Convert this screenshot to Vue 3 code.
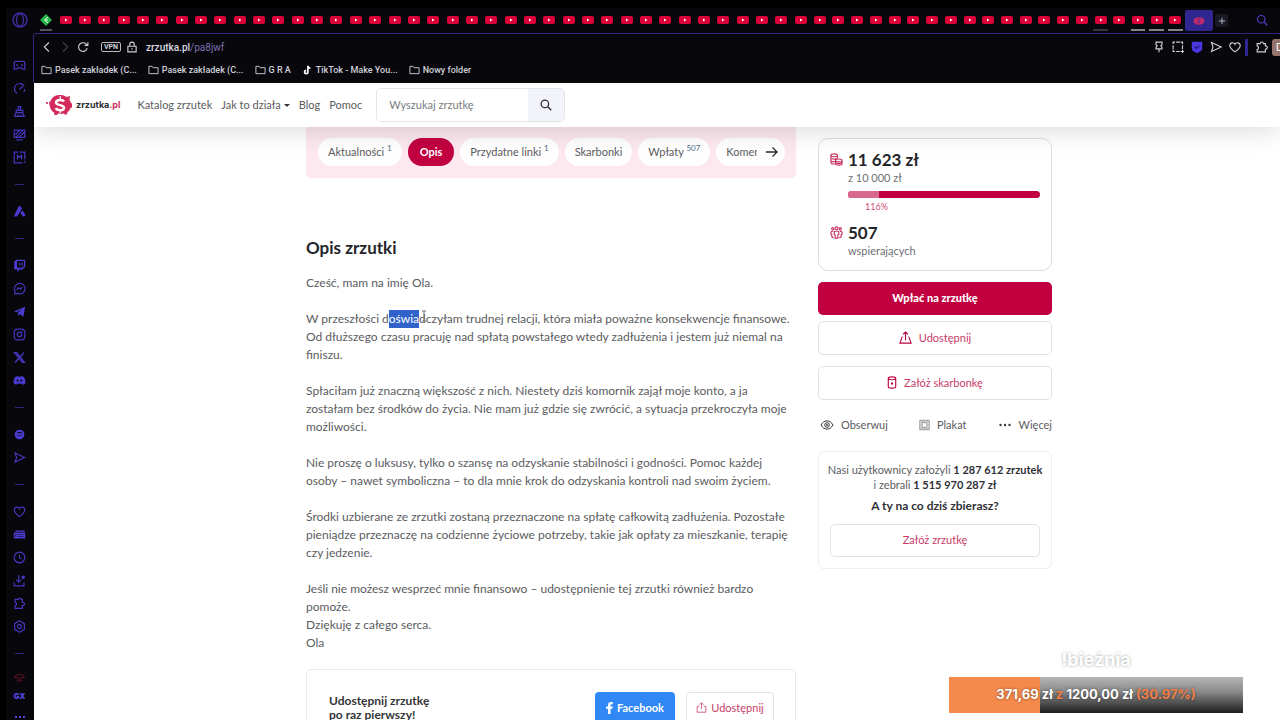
<script setup>
import { ref } from "vue";

const searchWord = ref("");
const currentTab = ref("Opis");

// tabs with a line under the icon
const marks = { 54: "dim", 56: "bright", 57: "bright", 58: "bright" };
const browserTabs = Array.from({ length: 59 }, (_, index) => ({
  id: index,
  narrow: index >= 39,
  mark: marks[index] || "",
}));

const sideItems = [
  { name: "gamepad", d: "M3 3h10a1.500 1.500 0 0 1 1.500 1.500v8h-3L10 11H6l-1.500 1.500h-3v-8A1.500 1.500 0 0 1 3 3zM4 7.500h2.200M5.100 6.400v2.200M9.800 7.500H12M10.900 6.400v2.200" },
  { name: "speed", d: "M5 14A6.500 6.500 0 1 1 13.800 5M8 9l4-3.500M14.500 8.500a6 6 0 0 1-1.500 4" },
  { name: "cleaner", d: "M6.500 2h3v4h-3zM4 6.500h8v3H4zM3.500 9.500L2 14h11l-1-4.500M6 14v-2M9 14v-2M12 13h3" },
  { name: "wallpaper", d: "M1.500 2.500h13v9h-13zM4 14.500h8M3 8l5-5M4 11l8-8M8 11l6-6" },
  { name: "mods", d: "M6 1.500H1.500v13H12M8 1.500h6.500V10M14.500 12v2.500M5.500 10.500v-5L8 8l2.500-2.500v5" },
  { name: "line1", line: true },
  { name: "aria", fill: true, d: "M7 1.500h2.500L11 5 5 14H1zM10.500 8l1.500-1 3.500 5.500-1.500 1.500h-2L9 9.500z" },
  { name: "line2", line: true },
  { name: "twitch", fill: true, d: "M4 1h11v8.500L11.500 13H8.500L5.500 16v-3H1.500V3.500zM5 2.500v8h2.500v1.500L9 10.500h2.500l2-2v-6zM7.500 4.500H9V8H7.500zM10.500 4.500H12V8h-1.500z" },
  { name: "messenger", d: "M2 14.500l.5-3.500A6.500 6.500 0 1 1 5.500 14zM4.500 9.500L7 7l2 1.800L11.500 6.500" },
  { name: "telegram", fill: true, d: "M1 8L15 2 12.800 14.500 8.500 11.200 6.500 13.500 6 9.500 11.500 5 4.500 9z" },
  { name: "instagram", d: "M5 1.500h6A3.500 3.500 0 0 1 14.500 5v6a3.500 3.500 0 0 1-3.500 3.500H5A3.500 3.500 0 0 1 1.500 11V5A3.500 3.500 0 0 1 5 1.500zM8 5.200a2.800 2.800 0 1 0 .01 0zM11.600 3.700v1.200" },
  { name: "x", d: "M2 2h2.500l9.500 12h-2.500zM13.500 2L9 7.200M7 9.200L2.500 14", bold: true },
  { name: "discord", fill: true, d: "M3 3.500l3-1 .7 1h2.600l.7-1 3 1c2 2.500 2.500 5 2.200 8L12 13.500l-1-1.500H5l-1 1.500-3.200-2C.5 8.500 1 6 3 3.500zM5.700 6.800a1.200 1.300 0 1 0 .01 0zM10.300 6.800a1.200 1.300 0 1 0 .01 0z" },
  { name: "line3", line: true },
  { name: "spotify", fill: true, d: "M8 2a6 6 0 1 0 .01 0zM5 5.500c2.500-.8 4.500-.5 6.500.5v1c-2-1-4-1.200-6.500-.5zM5 8.500c2-.6 4-.4 5.500.5v.8c-1.700-.8-3.500-1-5.500-.4z" },
  { name: "flow", d: "M2.500 2.500L14.500 8l-12 5.500 2-5.500z" },
  { name: "line4", line: true },
  { name: "heart", d: "M8 14.300C5 12 1.500 9 1.500 6c0-3.800 5-4.800 6.500-1.500C9.500 1.200 14.500 2.200 14.500 6c0 3-3.500 6-6.500 8.300z" },
  { name: "wallet", fill: true, d: "M3 3h11.500v1.500H3zM1 5.500h14V13H1zM3 7.500v3.500h1V7.500zM6 8v.7h7V8zM6 10.200v.7h7v-.7z" },
  { name: "history", d: "M8 1.500a6.500 6.500 0 1 0 .01 0zM8 4.500V8.500l2.500 1" },
  { name: "downloads", d: "M7 1.500v8M4 7l3 3 3-3M1.500 10.500v4h12v-4M12.500 2.500a1.500 1.500 0 1 0 .01 0zM12.500 3v2" },
  { name: "extensions", d: "M2.500 3h4c.5-2 3-2 3.500 0h1.500v3.500c3.500-.5 3.500 4 0 4V14h-9v-3c2.500-.5 2.500-4 0-4.500z" },
  { name: "settings", d: "M8 1l6 3.500v7L8 15l-6-3.500v-7zM8 5.500a2.500 2.500 0 1 0 .01 0z" },
  { name: "line5", line: true },
];

const bookmarks = [
  { id: 1, name: "Pasek zakładek (C...", folder: true },
  { id: 2, name: "Pasek zakładek (C...", folder: true },
  { id: 3, name: "G R A", folder: true },
  { id: 4, name: "TikTok - Make You...", folder: false },
  { id: 5, name: "Nowy folder", folder: true },
];

const toolIcons = [
  { name: "Przypnij", d: "M4 1.500h8v3.500l-1.500 1.500L12 8.500v2H4v-2l1.500-2L4 5zM8 10.500V15" },
  { name: "Zrzut ekranu", d: "M1.500 4V1.500H4M5.500 1.500h5M11.500 1.500H14V4M14 5.500v5M1.500 5.500v5M1.500 11.500V14H4M5.500 14h5M11.500 14H16M14 11.500V16" },
  { name: "Ochrona", fill: true, d: "M1 1h14v8.500c0 3.500-4 5-7 6.500-3-1.500-7-3-7-6.500z" },
  { name: "Wyślij", d: "M2 2l13 6-13 6 2-6z" },
  { name: "Ulubione", d: "M8 14.500C5 12.500 1 9.500 1 6c0-4 5.500-5 7-1.500C9.500 1 15 2 15 6c0 3.500-4 6.500-7 8.500z" },
];

const tabs = [
  { name: "Aktualności", count: 1 },
  { name: "Opis" },
  { name: "Przydatne linki", count: 1 },
  { name: "Skarbonki" },
  { name: "Wpłaty", count: 507 },
  { name: "Komentarze" },
];

const collected = 11623;
const goal = 10000;
const overGoal = ((collected - goal) / goal) * 100;

const stream = { now: "371,69 zł", goal: "1200,00 zł", percent: 30.97 };
</script>

<template>
  <div class="browser">
    <aside class="side-bar">
      <svg class="opera" viewBox="0 0 16 16">
        <ellipse cx="8" cy="8" rx="7" ry="7" />
        <ellipse cx="8" cy="8" rx="3.500" ry="6" />
      </svg>
      <div
        v-for="item in sideItems"
        :key="item.name"
        :class="item.line ? 'side-line' : 'side-item'"
      >
        <svg
          v-if="!item.line"
          viewBox="0 0 16 16"
          :class="{ fill: item.fill, bold: item.bold }"
        >
          <path :d="item.d" fill-rule="evenodd" />
        </svg>
      </div>
      <svg class="side-red" viewBox="0 0 16 16">
        <path d="M2 7l3-3h6l3 3-3 1H5zM5 10l1 2M8 9v4M11 10l-1 2" />
      </svg>
      <span class="gx">GX</span>
      <span class="dots"><i></i><i></i><i></i></span>
    </aside>

    <div class="window">
      <div class="tab-strip">
        <div class="tab pinned">
          <svg viewBox="0 0 12 12">
            <path d="M6 0l6 6-6 6-6-6z" fill="#27b24a" />
            <path d="M8 3L4.500 6 8 9M5 6h3" stroke="#d9ffe0" fill="none" />
          </svg>
        </div>
        <div class="tab-list">
          <div
            v-for="t in browserTabs"
            :key="t.id"
            class="tab"
            :class="[t.mark, { narrow: t.narrow }]"
          >
            <svg viewBox="0 0 12 8">
              <rect width="12" height="8" rx="2" fill="#dc0039" />
              <path d="M5 2.500v3L7.500 4z" fill="#fff" />
            </svg>
          </div>
        </div>
        <div class="tab active">
          <svg viewBox="0 0 12 8">
            <ellipse cx="6" cy="4" rx="5.500" ry="3.800" fill="#c22968" />
            <path d="M7.500 2.500c-3-1-3 1-1.500 1.500s1.500 2.300-1.500 1.500" stroke="#4a2a99" fill="none" />
          </svg>
        </div>
        <button type="button" class="new-tab" aria-label="Nowa karta">
          <svg viewBox="0 0 10 10"><path d="M5 1v8M1 5h8" /></svg>
        </button>
        <svg class="tab-search" viewBox="0 0 16 16">
          <circle cx="7" cy="7" r="5" />
          <path d="M11 11l4 4" />
        </svg>
      </div>

      <div class="toolbar">
        <div class="address-row">
          <svg class="icon" viewBox="0 0 16 16"><path d="M10.500 2l-6 6 6 6" /></svg>
          <svg class="icon off" viewBox="0 0 16 16"><path d="M5.500 2l6 6-6 6" /></svg>
          <svg class="icon" viewBox="0 0 16 16">
            <path d="M13.500 9.500A5.800 5.800 0 1 1 12 4l1.500 1.500M14.500 1.500V6H10" />
          </svg>
          <span class="vpn">VPN</span>
          <svg class="icon lock" viewBox="0 0 16 16">
            <path d="M2.500 7h11v7.500h-11zM5 7V4.500a3 3 0 0 1 6 0V7M8 9.500v2" />
          </svg>
          <span class="url"><b>zrzutka.pl</b>/pa8jwf</span>
          <div class="tools">
            <svg
              v-for="icon in toolIcons"
              :key="icon.name"
              class="icon"
              :class="{ shield: icon.fill }"
              viewBox="0 0 16 16"
            >
              <path :d="icon.d" />
              <path v-if="icon.fill" class="tick" d="M5 7.500l2.500 2.500L11 6" />
            </svg>
          </div>
          <span class="tool-line"></span>
          <svg class="icon puzzle" viewBox="0 0 16 16">
            <path d="M1.500 3.500h4c.5-3 4-3 4.500 0h2.500V6.500c3.500 0 3.500 4.500 0 4.500v3.500h-11v-3c2.500-.5 2.500-4.500 0-5z" />
          </svg>
          <span class="profile">D</span>
        </div>
        <nav class="bookmarks">
          <a v-for="b in bookmarks" :key="b.id" href="#">
            <svg v-if="b.folder" viewBox="0 0 12 10">
              <path d="M1 1h3.500l1 1.500H11v6.500H1z" />
            </svg>
            <svg v-else class="note" viewBox="0 0 12 12">
              <path d="M6.500 1v7.500a2 2 0 1 1-2-2M6.500 1.500c.5 1.500 1.500 2.300 3 2.500" />
            </svg>
            {{ b.name }}
          </a>
        </nav>
      </div>

      <div class="page">
        <header class="site-header">
          <a href="#" class="logo">
            <svg viewBox="0 0 28 22">
              <circle cx="2" cy="9" r="1" fill="#c2184f" />
              <path d="M4 8c1 0 1.500-1 2-2C8 2 12 .8 16 1c2 0 4 .8 5.500 2L25 2l-.500 4c.8 1 1.200 2 1.500 3l1 .5v4l-1.500.5c-.5 1.500-1.500 3-3 4l-.5 2.500h-2.500L19 19.500c-2 .5-4 .5-6 0L12 21H9.500L9 18.500C6.500 17 5 14.500 4.500 11z" fill="#d42b5c" />
              <path d="M19 7.500c-1.500-2.500-8-2-8 1 0 3.200 8 2 8 5.200 0 3.200-6.500 3.300-8.500.6" stroke="#fff" stroke-width="2.500" fill="none" />
              <path d="M15.200 2v3M15.200 16.500v3" stroke="#fff" stroke-width="1.200" />
            </svg>
            <span>zrzutka<em>.pl</em></span>
          </a>
          <nav class="menu">
            <a href="#">Katalog zrzutek</a>
            <a href="#" class="has-more">Jak to działa</a>
            <a href="#">Blog</a>
            <a href="#">Pomoc</a>
          </nav>
          <form class="search" @submit.prevent>
            <input
              type="text"
              v-model.trim="searchWord"
              placeholder="Wyszukaj zrzutkę"
              aria-label="Wyszukaj zrzutkę"
            />
            <button type="submit" aria-label="Szukaj">
              <svg viewBox="0 0 16 16">
                <circle cx="6.500" cy="6.500" r="5" />
                <path d="M10.300 10.300L15 15" />
              </svg>
            </button>
          </form>
        </header>

        <div class="content">
          <main>
            <div class="tab-panel">
              <div class="pills">
                <button
                  v-for="t in tabs"
                  :key="t.name"
                  type="button"
                  class="pill"
                  :class="{ current: currentTab === t.name }"
                  @click="currentTab = t.name"
                >
                  {{ t.name }} <sup v-if="t.count">{{ t.count }}</sup>
                </button>
              </div>
              <button type="button" class="next" aria-label="Dalej">
                <svg viewBox="0 0 14 12"><path d="M1 6h12M8 1l5 5-5 5" /></svg>
              </button>
            </div>

            <h2>Opis zrzutki</h2>
            <div class="description">
              <p>Cześć, mam na imię Ola.</p>
              <p>
                W przeszłości d<mark>oświa</mark><span class="caret-spot"
                  ><svg class="cursor" viewBox="0 0 6 12">
                    <path d="M1 1h4M3 1v10M1 11h4" /></svg></span
                >dczyłam trudnej relacji, która miała poważne konsekwencje
                finansowe.<br />Od dłuższego czasu pracuję nad spłatą powstałego
                wtedy zadłużenia i jestem już niemal na<br />finiszu.
              </p>
              <p>
                Spłaciłam już znaczną większość z nich. Niestety dziś komornik
                zajął moje konto, a ja<br />zostałam bez środków do życia. Nie
                mam już gdzie się zwrócić, a sytuacja przekroczyła moje<br />możliwości.
              </p>
              <p>
                Nie proszę o luksusy, tylko o szansę na odzyskanie stabilności i
                godności. Pomoc każdej<br />osoby – nawet symboliczna – to dla
                mnie krok do odzyskania kontroli nad swoim życiem.
              </p>
              <p>
                Środki uzbierane ze zrzutki zostaną przeznaczone na spłatę
                całkowitą zadłużenia. Pozostałe<br />pieniądze przeznaczę na
                codzienne życiowe potrzeby, takie jak opłaty za mieszkanie,
                terapię<br />czy jedzenie.
              </p>
              <p>
                Jeśli nie możesz wesprzeć mnie finansowo – udostępnienie tej
                zrzutki również bardzo<br />pomoże.<br />Dziękuję z całego
                serca.<br />Ola
              </p>
            </div>

            <section class="share">
              <p>Udostępnij zrzutkę<br />po raz pierwszy!</p>
              <button type="button" class="facebook">
                <svg viewBox="0 0 8 14">
                  <path d="M2.300 14V8H0V5.300h2.300V3.500C2.300 1.200 3.600 0 5.700 0L8 .2v2.300H6.500c-1 0-1.300.5-1.300 1.300v1.500h2.600L7.400 8H5.200v6z" />
                </svg>
                Facebook
              </button>
              <button type="button" class="share-btn">
                <svg viewBox="0 0 14 14">
                  <path d="M4 5.500H1.500V13h11V5.500H10M7 9V1M4.500 3.500L7 1l2.500 2.500" />
                </svg>
                Udostępnij
              </button>
            </section>
          </main>

          <aside class="summary">
            <section class="card totals">
              <svg class="red-icon" viewBox="0 0 14 14">
                <path d="M1 2.500c0-2 7-2 7 0V6M1 2.500v8c0 1 1.500 1.500 4 1.500M1 2.500c0 2 7 2 7 0M1 5c0 1.500 4 2 6 1M1 8c0 1 2 1.500 4.500 1.300M6 8c0-2 7-2 7 0v3.500c0 2-7 2-7 0zM6 8c0 2 7 2 7 0M6 10c0 1.700 7 1.700 7 0" />
              </svg>
              <div class="money">
                <strong>11 623 zł</strong>
                <span>z 10 000 zł</span>
                <div class="bar">
                  <div class="over" :style="{ width: overGoal + '%' }"></div>
                </div>
                <small>{{ Math.floor((collected / goal) * 100) }}%</small>
              </div>
              <svg class="red-icon" viewBox="0 0 14 14">
                <circle cx="7" cy="2.500" r="1.500" />
                <circle cx="3" cy="3" r="1.200" />
                <circle cx="11" cy="3" r="1.200" />
                <path d="M4.500 9V6.500C4.500 5 9.500 5 9.500 6.500V9l-1 .5V13h-3V9.500zM3.500 5.500C2 5.500 1 6 1 7.500V9l1 .5V12l2 .5M10.500 5.500C12 5.500 13 6 13 7.500V9l-1 .5V12l-2 .5" />
              </svg>
              <div class="people">
                <strong>507</strong>
                <span>wspierających</span>
              </div>
            </section>

            <button type="button" class="pay">Wpłać na zrzutkę</button>
            <button type="button" class="outline">
              <svg viewBox="0 0 14 14">
                <path d="M3.500 6L1 13h12l-2.500-7M7 10V1M4.500 3.500L7 1l2.500 2.500" />
              </svg>
              Udostępnij
            </button>
            <button type="button" class="outline second">
              <svg class="tin" viewBox="0 0 10 14">
                <path d="M1 2.500c0-2 8-2 8 0v9c0 2-8 2-8 0zM1 2.500c0 2 8 2 8 0M4.500 7.500h1v1h-1z" />
              </svg>
              Załóż skarbonkę
            </button>

            <div class="actions">
              <button type="button">
                <svg viewBox="0 0 14 12">
                  <path d="M1 6c3-5.500 9-5.500 12 0-3 5.500-9 5.500-12 0z" />
                  <circle cx="7" cy="6" r="2.300" />
                  <circle cx="7" cy="6" r=".6" />
                </svg>
                Obserwuj
              </button>
              <button type="button">
                <svg class="poster" viewBox="0 0 14 14">
                  <path d="M1 1h12v12H1zM4 4h6v6H4z" />
                  <path d="M2.500 2.500h9v9h-9z" stroke-dasharray="1 1" />
                </svg>
                Plakat
              </button>
              <button type="button">
                <svg class="more" viewBox="0 0 14 12">
                  <circle cx="2.500" cy="6" r="1.200" />
                  <circle cx="7" cy="6" r="1.200" />
                  <circle cx="11.500" cy="6" r="1.200" />
                </svg>
                Więcej
              </button>
            </div>

            <section class="card promo">
              <p>
                Nasi użytkownicy założyli <b>1 287 612 zrzutek</b><br />i
                zebrali <b>1 515 970 287 zł</b>
              </p>
              <h3>A ty na co dziś zbierasz?</h3>
              <button type="button" class="outline">Załóż zrzutkę</button>
            </section>
          </aside>
        </div>
      </div>
    </div>

    <div class="stream">
      <p class="command">!bieżnia</p>
      <div class="goal">
        <div class="goal-fill" :style="{ width: stream.percent + '%' }"></div>
        <p>
          {{ stream.now }} <em>z</em> {{ stream.goal }}
          <em>({{ stream.percent }}%)</em>
        </p>
      </div>
    </div>
  </div>
</template>

<style>
body {
  margin: 0;
  background-color: #000;
}
</style>

<style scoped>
* {
  box-sizing: border-box;
}

p,
h2,
h3 {
  margin: 0;
}

button {
  padding: 0;
  border: 0;
  background: none;
  font: inherit;
  color: inherit;
  cursor: pointer;
}

a {
  color: inherit;
  text-decoration: none;
}

svg {
  display: block;
  flex: none;
  fill: none;
}

.browser {
  position: relative;
  display: flex;
  height: 100vh;
  padding: 8px 0 0 6px;
  overflow: hidden;
  background-color: #000;
  font-family: Lato, "Noto Sans", sans-serif;
}

.side-bar {
  display: flex;
  flex-direction: column;
  align-items: center;
  width: 27px;
  flex: none;
  background-color: #07070c;
}

.side-bar svg {
  width: 13px;
  height: 13px;
  stroke: #4636bd;
  stroke-width: 1.5;
}

.side-bar svg.fill {
  fill: #4c3bd0;
  stroke: none;
}

.side-bar svg.bold {
  stroke-width: 1.8;
}

.side-bar .opera {
  width: 16px;
  height: 16px;
  margin: 4px 0 26px;
  stroke: #3b2d9d;
}

.side-item {
  display: flex;
  align-items: center;
  height: 23px;
}

.side-line {
  display: flex;
  align-items: center;
  height: 31px;
}

.side-line::before {
  content: "";
  width: 9px;
  height: 1px;
  background-color: #30257f;
}

.side-bar .side-red {
  height: 18px;
  stroke: #5b1024;
}

.gx {
  color: #5443d8;
  font: 900 8px/18px Inter, sans-serif;
}

.dots {
  display: flex;
  gap: 2px;
  padding-top: 11px;
}

.dots i {
  width: 2px;
  height: 2px;
  background-color: #5443d8;
}

.window {
  display: flex;
  flex-direction: column;
  flex: 1;
  min-width: 0;
}

.tab-strip {
  display: flex;
  height: 25px;
  background-color: #07070c;
}

.tab {
  display: flex;
  align-items: center;
  justify-content: center;
  flex: 31 1 0;
  border-bottom: 2px solid transparent;
}

.tab.narrow {
  flex-grow: 30;
}

.tab-strip .tab {
  height: 23px;
  padding-top: 2px;
}

.tab svg {
  width: 12px;
  height: 8px;
}

.tab.pinned {
  flex: none;
  width: 12px;
  margin-left: 7px;
  border-color: #555363;
}

.tab.pinned svg {
  height: 12px;
}

.tab.bright {
  border-image: linear-gradient(
      90deg,
      transparent 18%,
      #85838e 18%,
      #85838e 82%,
      transparent 82%
    )
    2;
}

.tab.dim {
  border-image: linear-gradient(
      90deg,
      transparent 18%,
      #34323f 18%,
      #34323f 82%,
      transparent 82%
    )
    2;
}

.tab-list {
  display: flex;
  flex: 1;
  margin-left: 4px;
}

.tab-strip .tab.active {
  flex: none;
  width: 28px;
  height: 21px;
  margin-top: 2px;
  padding-top: 0;
  border: 0;
  border-radius: 2px;
  background-color: #30268f;
}

.new-tab {
  display: flex;
  align-items: center;
  justify-content: center;
  width: 13px;
  height: 13px;
  margin: 6px 0 0 2px;
  border-radius: 2px;
  background-color: #191923;
}

.new-tab svg {
  width: 8px;
  height: 8px;
  stroke: #d6d6de;
}

.tab-search {
  width: 12px;
  height: 12px;
  margin: 6px 12px 0 28px;
  stroke: #5040c8;
  stroke-width: 1.6;
}

.toolbar {
  height: 50px;
  flex: none;
  border-top: 1px solid #30267c;
  border-left: 1px solid #30267c;
  border-radius: 3px 0 0;
  background-color: #07070c;
  color: #d0d0d8;
  font-family: Roboto, sans-serif;
}

.address-row {
  display: flex;
  align-items: center;
  height: 26px;
  padding-left: 7px;
}

.icon {
  width: 12px;
  height: 12px;
  stroke: #d0d0d8;
  stroke-width: 1.5;
}

.icon + .icon {
  margin-left: 6px;
}

.icon.off {
  stroke: #45434d;
}

.vpn {
  margin: 0 5px 0 12px;
  padding: 0 2px;
  border: 1px solid #b9b9c2;
  border-radius: 2px;
  font-size: 7px;
  font-weight: 700;
  line-height: 8px;
}

.url {
  margin-left: 8px;
  color: #7d72ae;
  font-size: 10px;
}

.url b {
  color: #dcdce4;
  font-weight: 500;
}

.tools {
  display: flex;
  margin-left: auto;
}

.tools .icon {
  margin-left: 7px;
}

.shield {
  fill: #4b37e2;
  stroke: none;
}

.shield .tick {
  fill: none;
  stroke: #1c145e;
  stroke-width: 1.5;
}

.tool-line {
  width: 3px;
  height: 17px;
  margin-left: 4px;
  background-color: #30268f;
}

.puzzle {
  margin-left: 8px;
}

.profile {
  width: 8px;
  margin-left: 4px;
  padding-left: 4px;
  overflow: hidden;
  border-radius: 3px 0 0 3px;
  background-color: #95746c;
  color: #fff;
  font-size: 10px;
  line-height: 17px;
}

.bookmarks {
  display: flex;
  align-items: center;
  gap: 11px;
  height: 20px;
  padding-left: 7px;
  font-size: 9px;
  font-weight: 500;
}

.bookmarks a {
  display: flex;
  align-items: center;
  gap: 3px;
  white-space: nowrap;
}

.bookmarks svg {
  width: 11px;
  height: 10px;
  stroke: #d0d0d8;
}

.bookmarks .note {
  stroke: #fff;
  stroke-width: 2;
}

.page {
  flex: 1;
  min-height: 0;
  overflow: hidden;
  margin-left: 1px;
  background-color: #fff;
  color: #5b5c60;
  font-size: 12px;
}

.site-header {
  position: relative;
  z-index: 1;
  display: flex;
  align-items: center;
  height: 44px;
  padding-left: 11px;
  background-color: #fff;
  box-shadow: 0 6px 24px rgba(0, 0, 0, 0.12);
}

.logo {
  display: flex;
  align-items: center;
  gap: 3px;
  padding-bottom: 1px;
  color: #2c2c30;
  font: 700 9px Inter, sans-serif;
}

.logo svg {
  width: 28px;
  height: 22px;
}

.logo em {
  color: #cc2a5a;
  font-style: normal;
}

.menu {
  display: flex;
  gap: 9px;
  margin-left: 17px;
  padding-bottom: 1px;
  font-size: 11px;
}

.has-more::after {
  content: "";
  display: inline-block;
  margin-left: 3px;
  vertical-align: 2px;
  border: 3px solid transparent;
  border-top-color: #333;
  border-bottom: 0;
}

.search {
  display: flex;
  width: 189px;
  height: 34px;
  margin-left: 14px;
  overflow: hidden;
  border: 1px solid #e3e5ea;
  border-radius: 5px;
}

.search input {
  flex: 1;
  min-width: 0;
  padding: 0 12px 1px;
  border: 0;
  outline: 0;
  font: inherit;
  font-size: 11px;
}

.search input::placeholder {
  color: #7b7c80;
}

.search button {
  display: flex;
  align-items: center;
  justify-content: center;
  width: 36px;
  background-color: #f3f4f9;
}

.search svg {
  width: 12px;
  height: 12px;
  stroke: #2d2d33;
  stroke-width: 1.7;
}

.content {
  display: grid;
  grid-template-columns: minmax(0, 1fr) 234px;
  gap: 22px;
  padding: 0 228px 0 272px;
}

.tab-panel {
  display: flex;
  height: 51px;
  padding: 11px 11px 0 12px;
  border-radius: 0 0 5px 5px;
  background-color: #fce8ee;
}

.pills {
  display: flex;
  flex: 1;
  min-width: 0;
  gap: 6px;
  overflow: hidden;
}

.pill {
  height: 28px;
  padding: 0 10px 2px;
  border-radius: 14px;
  background-color: #fff;
  font-size: 11px;
  white-space: nowrap;
}

.pill sup {
  color: #4d7188;
  font-size: 8px;
  line-height: 8px;
}

.pill.current {
  padding: 0 12px 1px;
  background-color: #c10040;
  color: #fff;
  font-weight: 700;
}

.next {
  display: flex;
  align-items: center;
  justify-content: center;
  width: 28px;
  height: 28px;
  margin-left: -14px;
  border-radius: 14px;
  background-color: #fff;
}

.next svg {
  width: 13px;
  height: 12px;
  stroke: #26262a;
  stroke-width: 1.4;
}

h2 {
  margin-top: 58px;
  color: #242529;
  font-size: 17px;
  font-weight: 700;
  line-height: 24px;
}

.description {
  margin-top: 14px;
  line-height: 18px;
  white-space: nowrap;
}

.description p + p {
  margin-top: 18px;
}

mark {
  display: inline-block;
  background-color: #3162c9;
  color: #fff;
}

.caret-spot {
  position: relative;
}

.cursor {
  position: absolute;
  top: -1px;
  left: 2px;
  width: 6px;
  height: 12px;
  stroke: #777;
}

.share {
  display: flex;
  align-items: flex-start;
  height: 90px;
  margin-top: 17px;
  padding: 22px 21px 0 22px;
  border: 1px solid #e8e8ea;
  border-radius: 5px;
}

.share p {
  flex: 1;
  padding-top: 2px;
  color: #35363a;
  font-weight: 700;
  line-height: 14px;
}

.facebook,
.share-btn {
  display: flex;
  align-items: center;
  justify-content: center;
  gap: 4px;
  width: 80px;
  height: 33px;
  padding-bottom: 2px;
  border-radius: 4px;
  font-size: 11px;
}

.facebook {
  background-color: #2f88f5;
  color: #fff;
  font-weight: 700;
}

.facebook svg {
  width: 7px;
  height: 12px;
  fill: #fff;
}

.share-btn {
  width: 88px;
  margin-left: 11px;
  border: 1px solid #e6e1e4;
  color: #c73c68;
}

.share-btn svg {
  width: 11px;
  height: 11px;
  stroke: #c73c68;
}

.card {
  border: 1px solid #dcdde0;
  border-radius: 10px;
}

.totals {
  display: grid;
  grid-template-columns: 14px minmax(0, 1fr);
  align-content: start;
  gap: 0 4px;
  height: 133px;
  margin-top: 11px;
  padding: 11px 11px 0;
}

.red-icon {
  width: 13px;
  height: 13px;
  margin-top: 3px;
  stroke: #c4335f;
  stroke-width: 1.2;
}

.totals strong {
  display: block;
  color: #242529;
  font-size: 17px;
  line-height: 20px;
}

.totals span {
  display: block;
  color: #6e7074;
  font-size: 11px;
  line-height: 16px;
}

.bar {
  height: 7px;
  margin-top: 5px;
  overflow: hidden;
  border-radius: 4px;
  background-color: #c10040;
}

.over {
  height: 7px;
  background-color: #d9688f;
}

.totals small {
  display: block;
  height: 25px;
  padding-left: 17px;
  color: #cf4d76;
  font-size: 9px;
  line-height: 17px;
}

.pay {
  width: 100%;
  height: 33px;
  margin-top: 11px;
  padding-bottom: 2px;
  border-radius: 5px;
  background-color: #c10040;
  color: #fff;
  font-size: 11px;
  font-weight: 900;
}

.outline {
  display: flex;
  align-items: center;
  justify-content: center;
  gap: 7px;
  width: 100%;
  height: 34px;
  margin-top: 6px;
  padding-bottom: 2px;
  border: 1px solid #e4e1e4;
  border-radius: 5px;
  color: #c73c68;
  font-size: 11px;
}

.outline svg {
  width: 13px;
  height: 13px;
  stroke: #b8003e;
  stroke-width: 1.2;
}

.outline .tin {
  width: 10px;
}

.second {
  margin-top: 11px;
}

.actions {
  display: flex;
  justify-content: space-between;
  margin-top: 16px;
  padding-left: 2px;
}

.actions button {
  display: flex;
  align-items: center;
  gap: 7px;
  font-size: 11px;
  line-height: 18px;
}

.actions svg {
  width: 14px;
  height: 12px;
  stroke: #38393d;
}

.actions .poster {
  width: 11px;
  stroke: #77787c;
}

.actions .more {
  fill: #38393d;
  stroke: none;
}

.promo {
  height: 118px;
  margin-top: 17px;
  padding: 10px 11px 0;
  border-color: #efeff1;
  border-radius: 6px;
  text-align: center;
}

.promo p {
  margin: 0 -4px;
  font-size: 11px;
  line-height: 15px;
  white-space: nowrap;
}

.promo b,
h3 {
  color: #303136;
}

h3 {
  margin-top: 5px;
  font-size: 12px;
  line-height: 18px;
}

.promo .outline {
  height: 33px;
  margin-top: 9px;
}

.stream {
  position: absolute;
  right: 37px;
  bottom: 7px;
  width: 294px;
  color: #fff;
  font-family: Inter, sans-serif;
  font-weight: 700;
  text-align: center;
}

.command {
  font-size: 18px;
  line-height: 34px;
  text-shadow: 0 0 3px rgba(0, 0, 0, 0.35);
}

.goal {
  position: relative;
  height: 36px;
  background: linear-gradient(#b5b5b5, #8b8b8b 40%, #1e1e1e);
}

.goal-fill {
  height: 36px;
  background-color: #f58a4c;
}

.goal p {
  position: absolute;
  inset: 0;
  font-size: 13px;
  line-height: 35px;
  text-shadow: 0 0 3px rgba(0, 0, 0, 0.5);
}

.goal em {
  color: #f07f45;
  font-style: normal;
}
</style>
